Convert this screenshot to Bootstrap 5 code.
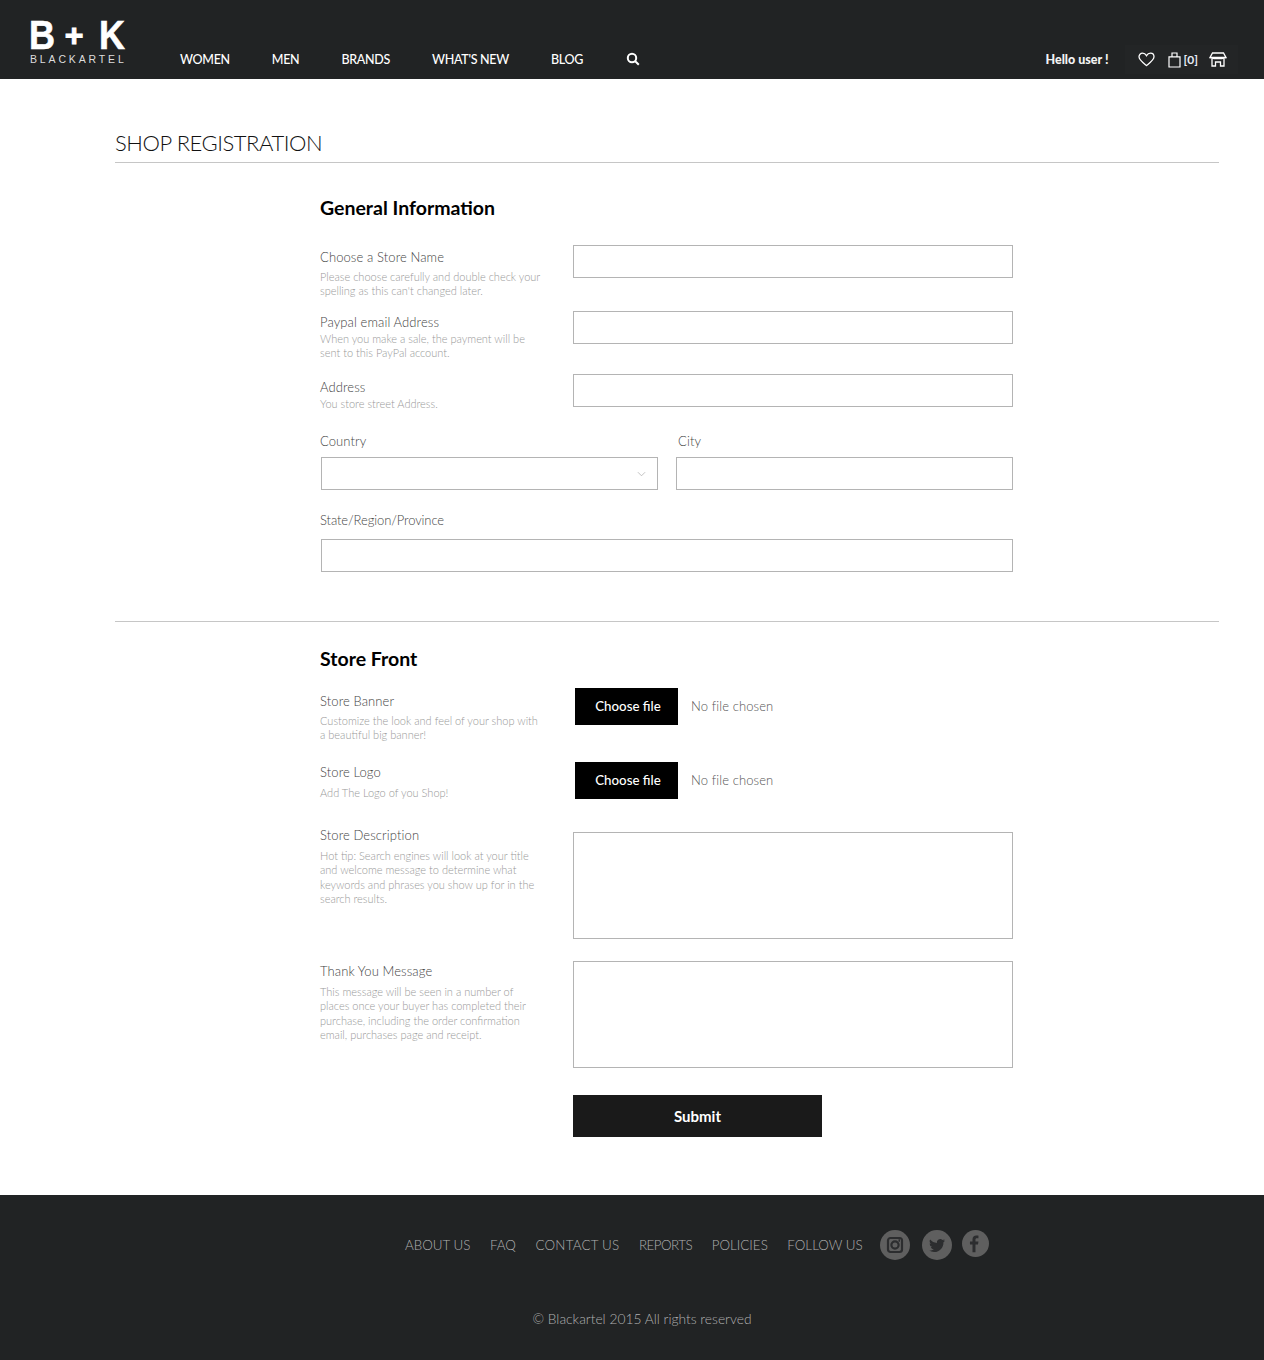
<!DOCTYPE html>
<html lang="en"><head><meta charset="utf-8"><title>Shop Registration</title>
<link rel="stylesheet" href="https://cdn.jsdelivr.net/npm/bootstrap@5.3.0/dist/css/bootstrap.min.css">
<style>
body{font-family:"Lato",sans-serif;font-weight:300;color:#555;background:#fff}
.topbar{height:79px;background:#212324;color:#fff}
.logo-box{width:96px;margin-left:29px;margin-top:20px;margin-right:55px;flex:none}
.logo-mark{font:700 40px/30px "Liberation Sans",sans-serif;color:#fff;display:flex;justify-content:space-between;align-items:center}
.logo-mark span{display:inline-block;transform:scaleX(.9);transform-origin:left center;-webkit-text-stroke:.6px #fff}
.logo-mark .plus{font-size:32px;transform:none;-webkit-text-stroke:1px #fff;margin-left:-6px}
.logo-mark .kay{transform-origin:right center}
.logo-word{font:400 10.5px/12px "Liberation Sans",sans-serif;letter-spacing:2.85px;color:#ddd;margin-top:3px;margin-left:1px;white-space:nowrap}
.mainnav{gap:42px;height:79px;padding-top:51px;font:500 12.5px/18px "Lato",sans-serif;letter-spacing:-.3px}
.mainnav a{color:#fff;text-decoration:none;white-space:nowrap}
.mainnav svg{display:block;margin:1px 0 0 1px}
.topright{margin-left:auto;padding-top:45px;padding-right:26px}
.hello{font:900 12.5px/18px "Lato",sans-serif;color:#f3f3f3;margin-right:16px;margin-top:6px}
.tools{background:#232526;height:29px;padding:0 11px 0 13px;gap:13px;color:#fff;font-size:12px}
.count{font-weight:700;color:#e6ecf5;margin-left:-10px}
.shopi{margin-left:-2px}
.page-wrap{padding:50px 45px 0 115px}
.page-title{font:300 22px/28px "Lato",sans-serif;letter-spacing:-.45px;color:#111;margin:0;border-bottom:1px solid #c6c6c6;height:34px}
.form-wrap{margin-left:205px;width:693px}
.sec-title{font:700 19.5px/26px "Lato",sans-serif;color:#000;margin:0}
.first{margin-top:32px;margin-bottom:24px}
.frow{display:flex}
.lbl-col{width:253px;flex:none}
.fld-col{width:440px;flex:none}
.lbl{display:block;font-size:13px;line-height:20px;color:#444;margin:0;letter-spacing:.1px}
.hint{font-size:11px;line-height:14.4px;color:#999;margin:0;width:222px}
.r1{height:66px}.r1 .lbl-col{padding-top:2px}.r1 .hint{margin-top:3px}
.r2{height:63px}.r2 .lbl-col{padding-top:1px}
.r3{height:57px}.r3 .lbl-col{padding-top:3px}
.bx{border:1px solid #b4b4b4;border-radius:0;height:33px;box-shadow:none;padding:0 8px;background-color:#fff}
.pair{display:flex;gap:18px;padding-left:1px;height:82px}
.pair>div{width:337px}
.pair .lbl{margin-bottom:6px;line-height:20px}
.cty{margin-left:-1px}
.city-lbl{padding-left:2px}
.sel{background-image:url("data:image/svg+xml,%3csvg xmlns='http://www.w3.org/2000/svg' viewBox='0 0 10 6'%3e%3cpath fill='none' stroke='%23aaa' stroke-width='.8' d='M1 1l4 4 4-4'/%3e%3c/svg%3e");background-size:9px 6px;background-position:right 11px center}
.state{margin-top:-3px;height:82px}
.state .lbl{margin-bottom:9px;letter-spacing:-.1px}
.state .bx{margin-left:1px;width:692px}
.rule{border:0;border-top:1px solid #c6c6c6;opacity:1;margin:0}
.gap-rule{margin-top:29px}
.r-banner{height:74px}.r-logo{height:70px}
.second{margin-top:24px;margin-bottom:16px}
.r-banner .lbl-col{padding-top:3px}
.r-banner .hint{margin-top:3px}.r-logo .hint{margin-top:4px}
.r-logo .lbl-col{padding-top:0}
.file-line{height:37px;margin-left:2px}
.pick{background:#000;color:#fff;height:37px;width:103px;margin:0 13px 0 0;font:500 13.3px/37px "Lato",sans-serif;text-align:center;padding-left:3px;cursor:pointer}
.nofile{font-size:13px;letter-spacing:.1px;color:#555}
.ta{height:107px;resize:none}
.r-ta1{height:129px}.r-ta2{height:134px}
.tx-wrap .lbl{margin-bottom:4px}
.r-ta1 .lbl{margin-top:-7px}
.sub-btn{display:block;width:249px;height:42px;border:0;border-radius:0;background:#1a1a1a;color:#fff;font:700 15px "Lato",sans-serif;padding:0}
.sub-row{padding-bottom:58px}
.foot{height:165px;background:#212324;color:#b0b0b0}
.foot-links{padding:35px 0 0 405px;height:100px;gap:19.5px;font-size:13.4px;line-height:30px}
.foot-links a{color:#b0b0b0;text-decoration:none;white-space:nowrap}
.foot-links .wide{letter-spacing:.2px}
.foot-links .tight{letter-spacing:-.5px}
.soc{display:block;border-radius:50%;background:#5f5f5f;flex:none}
.soc1{margin-left:-2px}
.soc2{margin-left:-7.5px}.soc3{margin-left:-9.5px}
.copy{text-align:center;width:1284px;font-size:13.8px;line-height:20px;margin:14px 0 0}
</style></head>
<body>
<header class="topbar d-flex">
  <div class="logo-box">
    <div class="logo-mark"><span>B</span><span class="plus">+</span><span class="kay">K</span></div>
    <div class="logo-word">BLACKARTEL</div>
  </div>
  <nav class="mainnav d-flex align-items-start">
    <a href="#">WOMEN</a><a href="#">MEN</a><a href="#">BRANDS</a><a href="#">WHAT'S NEW</a><a href="#">BLOG</a>
    <a href="#" aria-label="Search"><svg width="14" height="14" viewBox="0 0 14 14" fill="none" stroke="#fff" stroke-width="2"><circle cx="6" cy="6" r="4.2"/><path d="M9 9l3.8 3.8"/></svg></a>
  </nav>
  <div class="topright d-flex align-items-start">
    <span class="hello">Hello user !</span>
    <div class="tools d-flex align-items-center">
      <svg width="17" height="15" viewBox="0 0 17 15" fill="none" stroke="#fff" stroke-width="1.3"><path d="M8.5 13.6C4 10 1 7.8 1 4.8 1 2.7 2.6 1.2 4.5 1.2c1.7 0 3.1 1 4 2.5.9-1.5 2.3-2.5 4-2.5 1.9 0 3.5 1.5 3.5 3.6 0 3-3 5.2-7.5 8.8z"/></svg>
      <svg width="13" height="16" viewBox="0 0 13 16" fill="none" stroke="#fff" stroke-width="1.2"><path d="M1 4.8h11V15H1zM4 4.8V1h5v3.8"/></svg>
      <span class="count">[0]</span>
      <svg class="shopi" width="18" height="15" viewBox="0 0 18 15" fill="none" stroke="#fff" stroke-width="1.3"><path d="M3.5 1h11l2.5 4.5H1zM1 5.5c0 1.500 16 1.500 16 0M3 7v7h3.500v-4h5v4H15V7"/></svg>
    </div>
  </div>
</header>
<main class="page-wrap">
  <h1 class="page-title">SHOP REGISTRATION</h1>
  <form class="form-wrap" onsubmit="return false">
    <h2 class="sec-title first">General Information</h2>
    <div class="frow r1">
      <div class="lbl-col"><label class="lbl">Choose a Store Name</label><p class="hint">Please choose carefully and double check your spelling as this can't changed later.</p></div>
      <div class="fld-col"><input class="form-control bx" type="text"></div>
    </div>
    <div class="frow r2">
      <div class="lbl-col"><label class="lbl">Paypal email Address</label><p class="hint">When you make a sale, the payment will be sent to this PayPal account.</p></div>
      <div class="fld-col"><input class="form-control bx" type="text"></div>
    </div>
    <div class="frow r3">
      <div class="lbl-col"><label class="lbl">Address</label><p class="hint">You store street Address.</p></div>
      <div class="fld-col"><input class="form-control bx" type="text"></div>
    </div>
    <div class="pair">
      <div><label class="lbl cty">Country</label><select class="form-select bx sel"><option></option></select></div>
      <div><label class="lbl city-lbl">City</label><input class="form-control bx" type="text"></div>
    </div>
    <div class="state"><label class="lbl">State/Region/Province</label><input class="form-control bx" type="text"></div>
  </form>
  <hr class="rule gap-rule">
  <div class="form-wrap">
    <h2 class="sec-title second">Store Front</h2>
    <div class="frow r-banner">
      <div class="lbl-col"><label class="lbl">Store Banner</label><p class="hint">Customize the look and feel of your shop with a beautiful big banner!</p></div>
      <div class="fld-col"><div class="file-line d-flex align-items-center"><label class="pick">Choose file<input class="visually-hidden" type="file"></label><span class="nofile">No file chosen</span></div></div>
    </div>
    <div class="frow r-logo">
      <div class="lbl-col"><label class="lbl">Store Logo</label><p class="hint">Add The Logo of you Shop!</p></div>
      <div class="fld-col"><div class="file-line d-flex align-items-center"><label class="pick">Choose file<input class="visually-hidden" type="file"></label><span class="nofile">No file chosen</span></div></div>
    </div>
    <div class="frow r-ta1">
      <div class="lbl-col tx-wrap"><label class="lbl">Store Description</label><p class="hint">Hot tip: Search engines will look at your title and welcome message to determine what keywords and phrases you show up for in the search results.</p></div>
      <div class="fld-col"><textarea class="form-control bx ta"></textarea></div>
    </div>
    <div class="frow r-ta2">
      <div class="lbl-col tx-wrap"><label class="lbl">Thank You Message</label><p class="hint">This message will be seen in a number of places once your buyer has completed their purchase, including the order confirmation email, purchases page and receipt.</p></div>
      <div class="fld-col"><textarea class="form-control bx ta"></textarea></div>
    </div>
    <div class="frow sub-row">
      <div class="lbl-col"></div>
      <div class="fld-col"><button class="btn sub-btn" type="submit">Submit</button></div>
    </div>
  </div>
</main>
<footer class="foot">
  <nav class="foot-links d-flex align-items-start">
    <a href="#">ABOUT US</a><a href="#">FAQ</a><a href="#" class="wide">CONTACT US</a><a href="#" class="tight">REPORTS</a><a href="#">POLICIES</a><a href="#">FOLLOW US</a>
    <svg class="soc soc1" width="30" height="30" viewBox="0 0 30 30" fill="none" stroke="#2c2d2f" stroke-width="2.2"><rect x="8" y="8" width="14" height="14" rx="2.5"/><circle cx="15" cy="15" r="3.6"/><path d="M18.5 10.5h1.5" stroke-width="2.5"/></svg>
    <svg class="soc soc2" width="30" height="30" viewBox="0 0 30 30"><path transform="translate(7 7.5) scale(.67)" fill="#2c2d2f" d="M23.953 4.57a10 10 0 01-2.825.775 4.958 4.958 0 002.163-2.723c-.951.555-2.005.959-3.127 1.184a4.92 4.92 0 00-8.384 4.482C7.69 8.095 4.067 6.13 1.64 3.162a4.822 4.822 0 00-.666 2.475c0 1.71.87 3.213 2.188 4.096a4.904 4.904 0 01-2.228-.616v.06a4.923 4.923 0 003.946 4.827 4.996 4.996 0 01-2.212.085 4.936 4.936 0 004.604 3.417 9.867 9.867 0 01-6.102 2.105c-.39 0-.779-.023-1.17-.067a13.995 13.995 0 007.557 2.209c9.053 0 13.998-7.496 13.998-13.985 0-.21 0-.42-.015-.63A9.935 9.935 0 0024 4.59z"/></svg>
    <svg class="soc soc3" width="27" height="27" viewBox="0 0 27 27"><path transform="translate(2 3.5) scale(.85)" fill="#2c2d2f" d="M13.5 22v-9h3l.5-3.5h-3.500V7.300c0-1 .3-1.700 1.800-1.700H17V2.500c-.3 0-1.400-.1-2.600-.1-2.600 0-4.400 1.600-4.400 4.500v2.600H7V13h3v9z"/></svg>
  </nav>
  <p class="copy">© Blackartel 2015 All rights reserved</p>
</footer>
<script src="https://cdn.jsdelivr.net/npm/bootstrap@5.3.0/dist/js/bootstrap.bundle.min.js"></script>
</body></html>
